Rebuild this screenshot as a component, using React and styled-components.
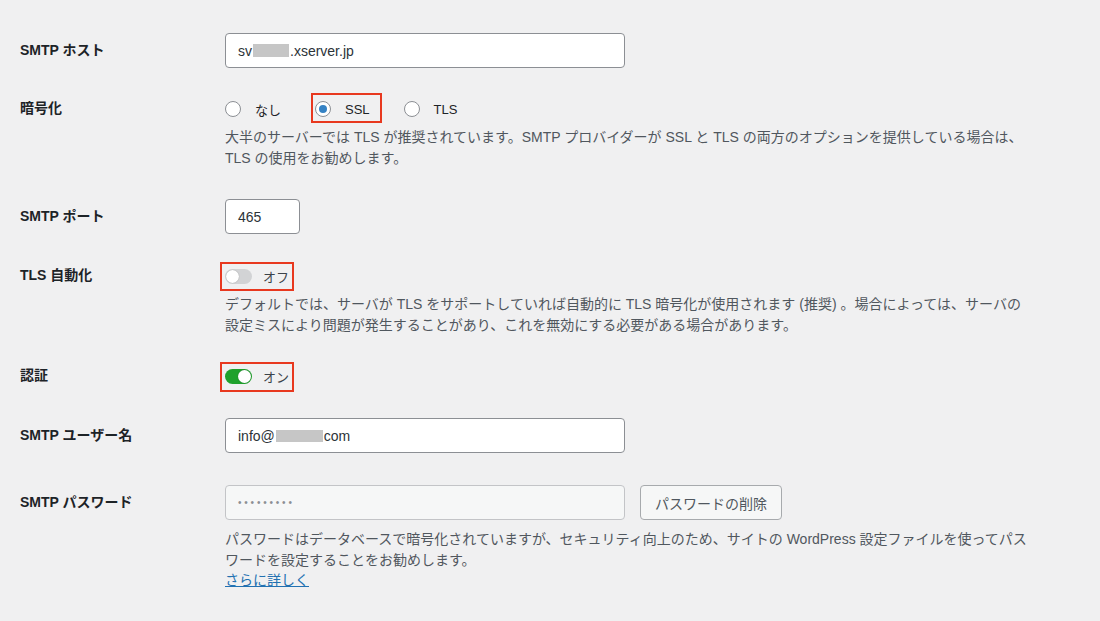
import React from 'react';
import styled, { createGlobalStyle } from 'styled-components';

const GlobalStyle = createGlobalStyle`
  html, body {
    margin: 0;
    padding: 0;
    background: #f0f0f1;
  }
  body {
    font-family: "Liberation Sans", "Noto Sans CJK JP", sans-serif;
    color: #1d2327;
    -webkit-font-smoothing: antialiased;
  }
`;

export default function App() {
  return (
    <>
      <GlobalStyle />
      <Page>
        <Row>
          <Label $h={37}>SMTP ホスト</Label>
          <Field>
            <TextBox $w={400}>
              sv<Redact $w={36} />.xserver.jp
            </TextBox>
          </Field>
        </Row>

        <Row>
          <Label $h={20}>暗号化</Label>
          <Field>
            <RadioGroup>
              <RadioOption>
                <RadioCircle />
                なし
              </RadioOption>
              <Highlight $inset="-6px -12px -4px -4px">
                <RadioOption>
                  <RadioCircle $checked />
                  SSL
                </RadioOption>
              </Highlight>
              <RadioOption>
                <RadioCircle />
                TLS
              </RadioOption>
            </RadioGroup>
            <Description>
              大半のサーバーでは TLS が推奨されています。SMTP プロバイダーが SSL と TLS の両方のオプションを提供している場合は、
              <br />
              TLS の使用をお勧めします。
            </Description>
          </Field>
        </Row>

        <Row>
          <Label $h={37}>SMTP ポート</Label>
          <Field>
            <TextBox $w={75}>465</TextBox>
          </Field>
        </Row>

        <Row>
          <Label $h={22}>TLS 自動化</Label>
          <Field>
            <Highlight $inset="-3px -5px -4px -5px">
              <ToggleLine>
                <Switch />
                オフ
              </ToggleLine>
            </Highlight>
            <Description $gap={7}>
              デフォルトでは、サーバが TLS をサポートしていれば自動的に TLS 暗号化が使用されます (推奨) 。場合によっては、サーバの
              <br />
              設定ミスにより問題が発生することがあり、これを無効にする必要がある場合があります。
            </Description>
          </Field>
        </Row>

        <Row>
          <Label $h={22}>認証</Label>
          <Field>
            <Highlight $inset="-3px -5px -5px -5px">
              <ToggleLine>
                <Switch $on />
                オン
              </ToggleLine>
            </Highlight>
          </Field>
        </Row>

        <Row>
          <Label $h={37}>SMTP ユーザー名</Label>
          <Field>
            <TextBox $w={400}>
              info@<Redact $w={47} $h={12} />com
            </TextBox>
          </Field>
        </Row>

        <Row>
          <Label $h={37}>SMTP パスワード</Label>
          <Field>
            <InlineControls>
              <TextBox $w={400} $disabled>
                <Dots>•••••••••</Dots>
              </TextBox>
              <Button type="button">パスワードの削除</Button>
            </InlineControls>
            <Description>
              パスワードはデータベースで暗号化されていますが、セキュリティ向上のため、サイトの WordPress 設定ファイルを使ってパス
              <br />
              ワードを設定することをお勧めします。
              <br />
              <MoreLink href="#">さらに詳しく</MoreLink>
            </Description>
          </Field>
        </Row>
      </Page>
    </>
  );
}

const Page = styled.div`
  width: 1100px;
  height: 621px;
  overflow: hidden;
  box-sizing: border-box;
  padding: 17px 0 0 20px;
`;

const Row = styled.div`
  display: grid;
  grid-template-columns: 205px 1fr;
  padding: 15px 0;
`;

const Label = styled.div`
  box-sizing: border-box;
  height: ${p => p.$h}px;
  padding-bottom: 4px;
  display: flex;
  align-items: center;
  font-size: 14px;
  font-weight: 600;
  color: #1d2327;
  white-space: nowrap;
`;

const Field = styled.div`
  display: flex;
  flex-direction: column;
  align-items: flex-start;
`;

const TextBox = styled.div`
  box-sizing: border-box;
  width: ${p => p.$w}px;
  height: 35px;
  margin: 1px 0;
  padding: 0 12px;
  display: flex;
  align-items: center;
  border: 1px solid ${p => (p.$disabled ? '#c3c4c7' : '#8c8f94')};
  border-radius: 4px;
  background: ${p => (p.$disabled ? '#f6f7f7' : '#fff')};
  font-size: 14px;
  color: #2c3338;
  white-space: nowrap;
`;

const Redact = styled.span`
  display: inline-block;
  width: ${p => p.$w}px;
  height: ${p => p.$h || 13}px;
  margin: 0 1px;
  background: #c6c6c6;
`;

const Dots = styled.span`
  font-size: 10px;
  letter-spacing: 2.8px;
  color: #8c8f94;
`;

const InlineControls = styled.div`
  display: flex;
  gap: 15px;
`;

const Button = styled.button`
  box-sizing: border-box;
  height: 35px;
  margin: 1px 0;
  padding: 0 14px;
  border: 1px solid #a7aaad;
  border-radius: 4px;
  background: #f6f7f7;
  color: #50575e;
  font-family: inherit;
  font-size: 14px;
  cursor: pointer;
`;

const RadioGroup = styled.div`
  display: flex;
  align-items: center;
  height: 20px;
  gap: 34px;
`;

const RadioOption = styled.label`
  display: flex;
  align-items: center;
  gap: 14px;
  height: 20px;
  font-size: 13px;
  color: #1d2327;
`;

const RadioCircle = styled.span`
  box-sizing: border-box;
  width: 16px;
  height: 16px;
  border: 1px solid #8c8f94;
  border-radius: 50%;
  background: #fff;
  display: flex;
  align-items: center;
  justify-content: center;

  &::after {
    content: '';
    display: ${p => (p.$checked ? 'block' : 'none')};
    width: 8px;
    height: 8px;
    border-radius: 50%;
    background: #3582c4;
  }
`;

const Highlight = styled.div`
  position: relative;

  &::after {
    content: '';
    position: absolute;
    inset: ${p => p.$inset};
    border: 2px solid #e8381f;
    pointer-events: none;
  }
`;

const ToggleLine = styled.div`
  display: flex;
  align-items: center;
  gap: 11px;
  height: 22px;
  font-size: 13px;
  color: #3c434a;
`;

const Switch = styled.span`
  position: relative;
  width: 27px;
  height: 15px;
  border-radius: 8px;
  background: ${p => (p.$on ? '#1fa12c' : '#d2d3d5')};

  &::after {
    content: '';
    position: absolute;
    top: 1px;
    left: ${p => (p.$on ? '13px' : '1px')};
    width: 13px;
    height: 13px;
    border-radius: 50%;
    background: #fff;
    box-shadow: 0 0 1px rgba(0, 0, 0, 0.35);
  }
`;

const Description = styled.p`
  margin: ${p => p.$gap || 8}px 0 0;
  font-size: 14px;
  line-height: 20.5px;
  color: #50575e;
  white-space: nowrap;
`;

const MoreLink = styled.a`
  color: #2271b1;
  text-decoration: underline;
`;
